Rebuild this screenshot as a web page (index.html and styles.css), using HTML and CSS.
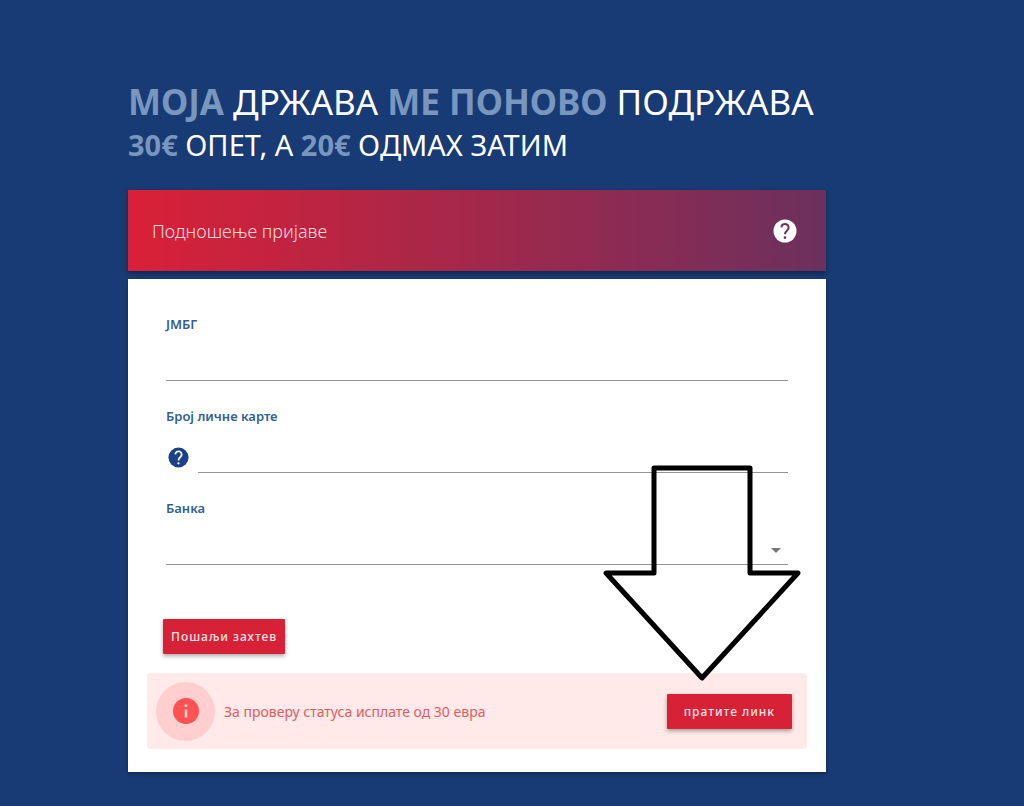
FILE: index.html
```html
<!DOCTYPE html>
<html lang="sr">
<head>
<meta charset="utf-8">
<title>Подношење пријаве</title>
<link rel="stylesheet" href="styles.css">
</head>
<body>
<main class="page">
  <h1 class="title"><b>МОЈА</b> ДРЖАВА <b>МЕ ПОНОВО</b> ПОДРЖАВА</h1>
  <p class="subtitle"><b>30€</b> ОПЕТ, А <b>20€</b> ОДМАХ ЗАТИМ</p>
  <header class="toolbar">
    <h2 class="toolbar-title">Подношење пријаве</h2>
    <button class="icon-button" type="button" aria-label="Помоћ">
      <svg class="help-icon" viewBox="0 0 24 24"><circle cx="12" cy="12" r="11.5" fill="currentColor"/><path class="help-mark" d="M8.4 8.4a3.6 3.6 0 1 1 6.1 2.7c-1.5 1.3-2.5 1.9-2.5 4.2"/><circle class="help-dot" cx="12" cy="18.6" r="1.3"/></svg>
    </button>
  </header>
  <form class="card">
    <div class="field">
      <label class="label" for="jmbg">ЈМБГ</label>
      <div class="control"><input class="input" id="jmbg" type="text"></div>
    </div>
    <div class="field">
      <label class="label" for="idcard">Број личне карте</label>
      <div class="control">
        <button class="icon-button blue" type="button" aria-label="Помоћ за број личне карте">
          <svg class="help-icon small" viewBox="0 0 24 24"><circle cx="12" cy="12" r="11.5" fill="currentColor"/><path class="help-mark" d="M8.4 8.4a3.6 3.6 0 1 1 6.1 2.7c-1.5 1.3-2.5 1.9-2.5 4.2"/><circle class="help-dot" cx="12" cy="18.6" r="1.3"/></svg>
        </button>
        <input class="input" id="idcard" type="text">
      </div>
    </div>
    <div class="field">
      <label class="label" for="bank">Банка</label>
      <div class="control select-control">
        <select class="input" id="bank"><option></option></select>
        <svg class="caret" viewBox="0 0 10 5"><path d="M0 0h10L5 5z" fill="#777"/></svg>
      </div>
    </div>
    <button class="button submit" type="submit">Пошаљи захтев</button>
    <div class="alert">
      <span class="alert-icon"><svg class="info-icon" viewBox="0 0 26 26"><circle cx="13" cy="13" r="13" fill="#ff5252"/><path d="M11.7 6.5h2.6v2.6h-2.6zM11.7 11.5h2.6v8h-2.6z" fill="#ffd0d0"/></svg></span>
      <span class="alert-text">За проверу статуса исплате од 30 евра</span>
      <button class="button link" type="button">пратите линк</button>
    </div>
    <svg class="arrow" viewBox="0 0 200 218" aria-hidden="true"><path d="M51 4H147V109H195L99 214L3 109H51Z"/></svg>
  </form>
</main>
</body>
</html>
```
FILE: styles.css
```css
* { box-sizing: border-box; }
body {
  margin: 0;
  min-height: 100vh;
  background: #183a75;
  font-family: "Noto Sans", "Open Sans", sans-serif;
}
.page {
  max-width: 1024px;
  padding: 80px 198px 32px 128px;
}
.title, .subtitle {
  margin: 0;
  color: #fff;
  font-weight: 400;
}
.title { font-size: 35px; line-height: 44px; }
.subtitle { font-size: 29px; line-height: 42px; }
.title b, .subtitle b { color: #7896be; font-weight: 700; }
.toolbar {
  display: flex;
  align-items: center;
  justify-content: space-between;
  margin-top: 24px;
  min-height: 81px;
  padding: 0 29px 0 24px;
  background: linear-gradient(90deg, #da2037, #6b305e);
  box-shadow: 0 2px 4px rgba(0, 0, 0, .35);
}
.toolbar-title { margin: 0; color: #fcd9df; font-size: 18px; font-weight: 300; }
.icon-button {
  display: flex;
  padding: 0;
  border: 0;
  background: none;
  color: #fff;
}
.help-icon { width: 24px; height: 24px; }
.help-icon.small { width: 21px; height: 21px; }
.help-mark { fill: none; stroke: #6f2f5c; stroke-width: 2; }
.help-dot { fill: #6f2f5c; }
.blue { color: #1b418b; margin: 0 9px 5px 2px; }
.blue .help-mark { stroke: #fff; stroke-width: 2; }
.blue .help-dot { fill: #fff; }
.card {
  position: relative;
  display: flex;
  flex-direction: column;
  margin-top: 8px;
  padding: 34px 19px 23px;
  background: #fff;
  box-shadow: 0 2px 3px rgba(0, 0, 0, .3);
}
.field { margin: 0 19px 24px 19px; }
.label {
  display: block;
  color: #316195;
  font-size: 13px;
  font-weight: 600;
  line-height: 22px;
}
.control { display: flex; align-items: flex-end; height: 46px; }
.input {
  flex: 1;
  min-width: 0;
  height: 32px;
  padding: 0;
  border: 0;
  border-bottom: 1px solid #949494;
  border-radius: 0;
  background: transparent;
  font: inherit;
  appearance: none;
  outline: 0;
}
.select-control { position: relative; }
.caret { position: absolute; right: 7px; bottom: 12px; width: 10px; height: 5px; }
.button {
  height: 35px;
  border: 0;
  border-radius: 1px;
  background: #d72137;
  color: #ffe3e6;
  font: 500 12px "Noto Sans", "Open Sans", sans-serif;
  letter-spacing: 1px;
  box-shadow: 0 2px 4px rgba(0, 0, 0, .35);
}
.submit { align-self: flex-start; margin: 30px 0 19px 16px; padding: 0 8px; }
.alert {
  display: flex;
  align-items: center;
  min-height: 76px;
  padding: 8px 15px 8px 9px;
  border-radius: 4px;
  background: #ffe9e9;
}
.alert-icon {
  display: flex;
  align-items: center;
  justify-content: center;
  width: 59px;
  height: 59px;
  border-radius: 50%;
  background: #ffcfcf;
}
.info-icon { width: 26px; height: 26px; }
.alert-text { flex: 1; margin-left: 9px; color: #e35c60; font-size: 14px; }
.link { padding: 0 17px; }
.arrow {
  position: absolute;
  right: 23px;
  bottom: 90px;
  width: 200px;
  height: 218px;
  pointer-events: none;
}
.arrow path { fill: none; stroke: #000; stroke-width: 5; stroke-linejoin: round; }
```
